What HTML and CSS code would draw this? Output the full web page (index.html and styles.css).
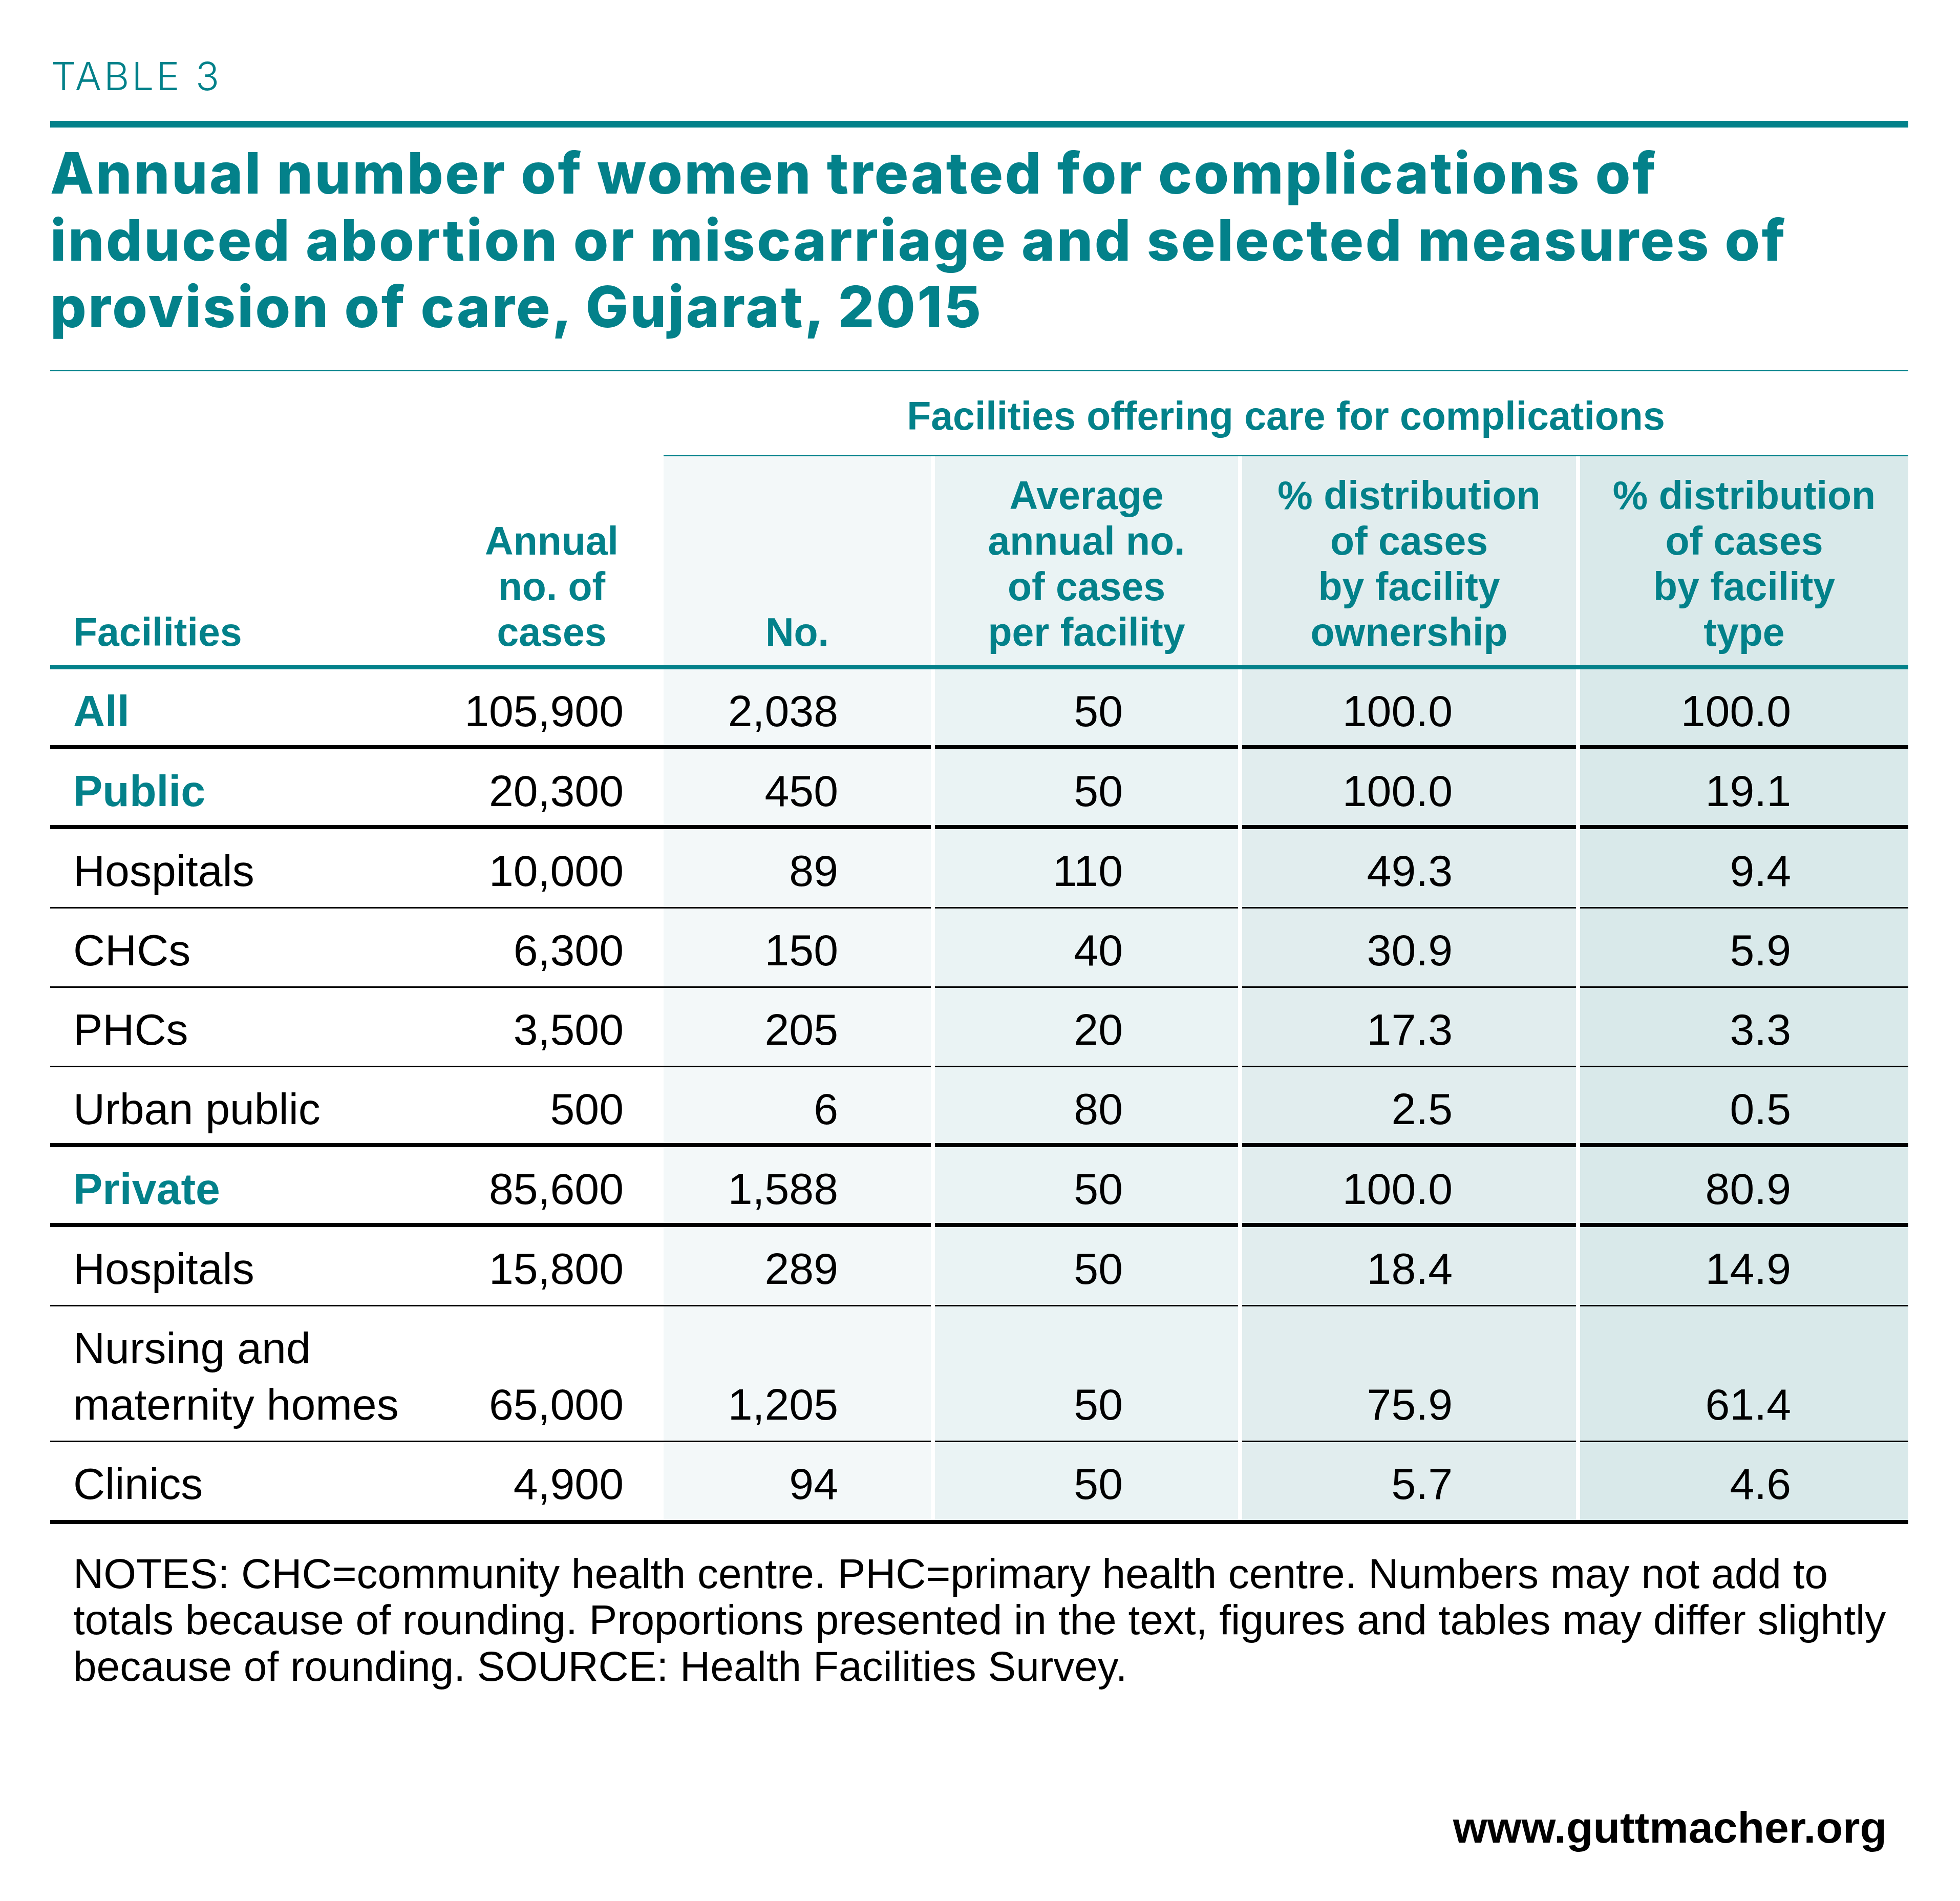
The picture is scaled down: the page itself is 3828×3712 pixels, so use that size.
FILE: index.html
```html
<!DOCTYPE html>
<html lang="en">
<head>
<meta charset="utf-8">
<title>Table 3</title>
<link rel="stylesheet" href="styles.css">
</head>
<body>
<div class="page">
  <div class="kicker">TABLE 3</div>
  <div class="rule-thick"></div>
  <h1 class="title">Annual number of women treated for complications of<br>induced abortion or miscarriage and selected measures of<br>provision of care, Gujarat, 2015</h1>
  <div class="rule-thin"></div>

  <div class="tbl">
    <div class="span-empty"></div>
    <div class="span-head">Facilities offering care for complications</div>

    <div class="th c1 left">Facilities</div>
    <div class="th c2">Annual<br>no. of<br>cases</div>
    <div class="th c3">No.</div>
    <div class="th c4">Average<br>annual no.<br>of cases<br>per facility</div>
    <div class="th c5">% distribution<br>of cases<br>by facility<br>ownership</div>
    <div class="th c6">% distribution<br>of cases<br>by facility<br>type</div>
    <div class="rule-teal"></div>

    <div class="td c1 b thick">All</div>
    <div class="td c2 num thick">105,900</div>
    <div class="td c3 num thick">2,038</div>
    <div class="td c4 num thick">50</div>
    <div class="td c5 num thick">100.0</div>
    <div class="td c6 num thick">100.0</div>

    <div class="td c1 b thick">Public</div>
    <div class="td c2 num thick">20,300</div>
    <div class="td c3 num thick">450</div>
    <div class="td c4 num thick">50</div>
    <div class="td c5 num thick">100.0</div>
    <div class="td c6 num thick">19.1</div>

    <div class="td c1 thin">Hospitals</div>
    <div class="td c2 num thin">10,000</div>
    <div class="td c3 num thin">89</div>
    <div class="td c4 num thin">110</div>
    <div class="td c5 num thin">49.3</div>
    <div class="td c6 num thin">9.4</div>

    <div class="td c1 thin">CHCs</div>
    <div class="td c2 num thin">6,300</div>
    <div class="td c3 num thin">150</div>
    <div class="td c4 num thin">40</div>
    <div class="td c5 num thin">30.9</div>
    <div class="td c6 num thin">5.9</div>

    <div class="td c1 thin">PHCs</div>
    <div class="td c2 num thin">3,500</div>
    <div class="td c3 num thin">205</div>
    <div class="td c4 num thin">20</div>
    <div class="td c5 num thin">17.3</div>
    <div class="td c6 num thin">3.3</div>

    <div class="td c1 thick">Urban public</div>
    <div class="td c2 num thick">500</div>
    <div class="td c3 num thick">6</div>
    <div class="td c4 num thick">80</div>
    <div class="td c5 num thick">2.5</div>
    <div class="td c6 num thick">0.5</div>

    <div class="td c1 b thick">Private</div>
    <div class="td c2 num thick">85,600</div>
    <div class="td c3 num thick">1,588</div>
    <div class="td c4 num thick">50</div>
    <div class="td c5 num thick">100.0</div>
    <div class="td c6 num thick">80.9</div>

    <div class="td c1 thin">Hospitals</div>
    <div class="td c2 num thin">15,800</div>
    <div class="td c3 num thin">289</div>
    <div class="td c4 num thin">50</div>
    <div class="td c5 num thin">18.4</div>
    <div class="td c6 num thin">14.9</div>

    <div class="td c1 thin">Nursing and<br>maternity homes</div>
    <div class="td c2 num thin">65,000</div>
    <div class="td c3 num thin">1,205</div>
    <div class="td c4 num thin">50</div>
    <div class="td c5 num thin">75.9</div>
    <div class="td c6 num thin">61.4</div>

    <div class="td c1 last">Clinics</div>
    <div class="td c2 num last">4,900</div>
    <div class="td c3 num last">94</div>
    <div class="td c4 num last">50</div>
    <div class="td c5 num last">5.7</div>
    <div class="td c6 num last">4.6</div>
    <div class="rule-black"></div>
  </div>

  <p class="notes">NOTES: CHC=community health centre. PHC=primary health centre. Numbers may not add to<br>totals because of rounding. Proportions presented in the text, figures and tables may differ slightly<br>because of rounding. SOURCE: Health Facilities Survey.</p>

  <div class="url">www.guttmacher.org</div>
</div>
</body>
</html>
```

FILE: styles.css
```css
* { box-sizing: border-box; }

html, body {
  margin: 0;
  padding: 0;
  background: #ffffff;
}

.page {
  width: 3828px;
  padding: 110px 101px 0 98px;
}

.kicker {
  font-family: Inter, "Liberation Sans", sans-serif;
  font-weight: 300;
  font-size: 76px;
  line-height: 76px;
  letter-spacing: 5px;
  color: #03818a;
  padding-left: 2px;
}

.rule-thick {
  margin-top: 50px;
  height: 13px;
  background: #03818a;
}

.title {
  margin: 24px 0 0 0;
  font-family: Inter, "Liberation Sans", sans-serif;
  font-weight: 800;
  font-size: 111px;
  line-height: 130.5px;
  color: #03818a;
  letter-spacing: 3.5px;
}

.rule-thin {
  margin-top: 57px;
  height: 3px;
  background: #03818a;
}

.tbl {
  display: grid;
  grid-template-columns: 761px 437px 522px 600px 660px 649px;
  font-family: "Liberation Sans", Arial, sans-serif;
}

.span-empty {
  grid-column: 1 / 3;
}

.span-head {
  grid-column: 3 / 7;
  text-align: center;
  font-weight: 700;
  font-size: 77px;
  line-height: 89px;
  color: #03818a;
  padding: 43px 0 31px;
  border-bottom: 3px solid #03818a;
}

.th {
  display: flex;
  flex-direction: column;
  justify-content: flex-end;
  text-align: center;
  font-weight: 700;
  font-size: 77px;
  line-height: 89px;
  color: #03818a;
  padding: 32px 0 20px;
}

.th.left {
  text-align: left;
  padding-left: 45px;
}

.rule-teal {
  grid-column: 1 / -1;
  height: 8px;
  background: #03818a;
}

.rule-black {
  grid-column: 1 / -1;
  height: 8px;
  background: #000000;
}

.td {
  display: flex;
  flex-direction: column;
  justify-content: flex-end;
  font-size: 86px;
  line-height: 110px;
  color: #000000;
  padding-top: 26px;
}

.td.thick {
  padding-bottom: 12px;
  border-bottom: 8px solid #000000;
}

.td.thin {
  padding-bottom: 16px;
  border-bottom: 3px solid #000000;
}

.td.last {
  padding-bottom: 16px;
}

.td.c1 {
  padding-left: 45px;
}

.td.b {
  font-weight: 700;
  color: #03818a;
}

.num {
  text-align: right;
}

.c2.num { padding-right: 78px; }
.c3.num { padding-right: 181px; }
.c4.num { padding-right: 225px; }
.c5.num { padding-right: 241px; }
.c6.num { padding-right: 229px; }

.c3 { background: #f3f8f9; }
.c4 { background: #eaf3f4; margin-left: 8px; }
.c5 { background: #e1edee; margin-left: 8px; }
.c6 { background: #d9e9ea; margin-left: 8px; }

.notes {
  margin: 52px 0 0 0;
  padding-left: 45px;
  font-family: "Liberation Sans", Arial, sans-serif;
  font-size: 82px;
  line-height: 90.5px;
  color: #000000;
}

.url {
  margin-top: 219px;
  text-align: right;
  padding-right: 42px;
  font-family: "Liberation Sans", Arial, sans-serif;
  font-weight: 700;
  font-size: 86px;
  line-height: 100px;
  color: #000000;
}
```
